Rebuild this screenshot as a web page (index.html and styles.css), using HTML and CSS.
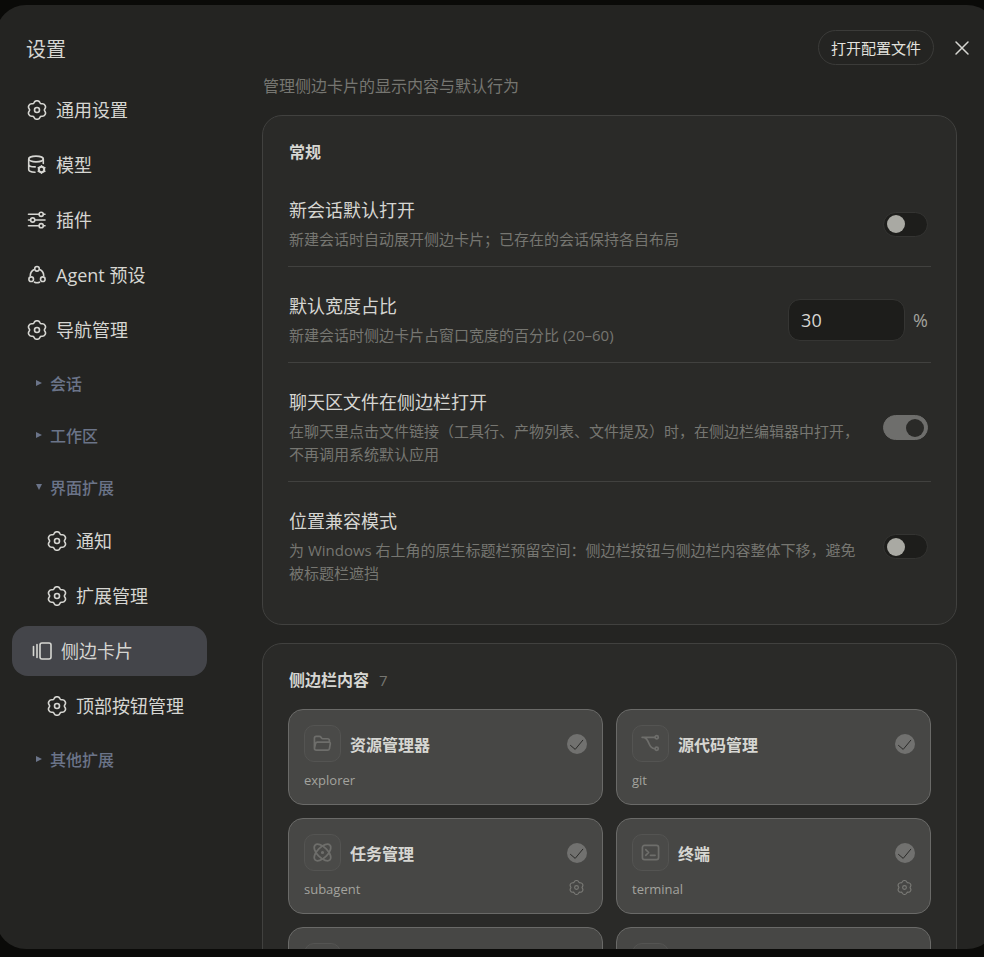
FILE: index.html
```html
<!DOCTYPE html>
<html lang="zh-CN">
<head>
<meta charset="utf-8">
<title>设置</title>
<link rel="stylesheet" href="styles.css">
</head>
<body>
<svg class="defs" aria-hidden="true">
  <symbol id="gear" viewBox="0 0 20 20">
    <path d="M6.950 2.820A3.260 3.260 0 0 1 13.050 2.820Q13.550 3.850 14.690 3.770A3.260 3.260 0 0 1 17.740 9.050Q17.100 10 17.740 10.950A3.260 3.260 0 0 1 14.690 16.230Q13.550 16.150 13.050 17.180A3.260 3.260 0 0 1 6.950 17.180Q6.450 16.150 5.310 16.230A3.260 3.260 0 0 1 2.260 10.950Q2.900 10 2.260 9.050A3.260 3.260 0 0 1 5.310 3.770Q6.450 3.850 6.950 2.820z"/>
    <circle cx="10" cy="10" r="2.500"/>
  </symbol>
</svg>
<div class="dialog" role="dialog" aria-labelledby="dialog-title">
  <aside class="sidebar">
    <h1 class="dialog-title" id="dialog-title">设置</h1>
    <nav class="nav">
      <a class="nav-item" href="#general"><svg class="icon"><use href="#gear"/></svg>通用设置</a>
      <a class="nav-item" href="#models"><svg class="icon" viewBox="0 0 20 20"><ellipse cx="9" cy="4" rx="7.300" ry="2.900"/><path d="M1.700 4v10.500c0 1.700 2.600 2.600 6.300 2.800M16.300 4v4.500M1.700 9.200c0 1.700 3.200 2.700 6.500 2.700"/><circle class="heavy" cx="14.500" cy="14.500" r="2.700"/><path d="M14.500 10.900v.6M14.500 17.500v.7M11.300 12.700l.6.300M17.200 16l.6.300M11.300 16.300l.6-.3M17.200 13l.6-.3"/></svg>模型</a>
      <a class="nav-item" href="#plugins"><svg class="icon" viewBox="0 0 20 20"><path d="M1.500 4.300h10.500M16.500 4.300h1.500M1.500 10h2M8 10h10M1.500 15.700h10.500M16.500 15.700h1.500"/><circle cx="14.200" cy="4.300" r="2.100"/><circle cx="5.700" cy="10" r="2.100"/><circle cx="14.200" cy="15.700" r="2.100"/></svg>插件</a>
      <a class="nav-item" href="#agents"><svg class="icon" viewBox="0 0 20 20"><circle cx="10" cy="3.800" r="2.300"/><circle cx="4.200" cy="14.200" r="2.300"/><circle cx="15.800" cy="14.200" r="2.300"/><path d="M6.700 4.800a7 7 0 0 0-3.400 6M13.300 4.800a7 7 0 0 1 3.400 6M7.500 17.200c1.600.7 3.400.7 5 0"/></svg>Agent 预设</a>
      <a class="nav-item" href="#navigation"><svg class="icon"><use href="#gear"/></svg>导航管理</a>
      <button class="nav-group" type="button" aria-expanded="false"><svg class="caret" viewBox="0 0 8 8"><path d="M1 1l6 3-6 3z"/></svg>会话</button>
      <button class="nav-group" type="button" aria-expanded="false"><svg class="caret" viewBox="0 0 8 8"><path d="M1 1l6 3-6 3z"/></svg>工作区</button>
      <button class="nav-group" type="button" aria-expanded="true"><svg class="caret" viewBox="0 0 8 8"><path d="M1 1h6L4 7z"/></svg>界面扩展</button>
      <a class="nav-item nested" href="#notifications"><svg class="icon"><use href="#gear"/></svg>通知</a>
      <a class="nav-item nested" href="#extensions"><svg class="icon"><use href="#gear"/></svg>扩展管理</a>
      <a class="nav-item active" href="#side-card" aria-current="page"><svg class="icon" viewBox="0 0 20 20"><rect x="8" y="2" width="11" height="16" rx="2"/><path d="M1.500 5.500v9M5 3.500v13"/></svg>侧边卡片</a>
      <a class="nav-item nested" href="#top-buttons"><svg class="icon"><use href="#gear"/></svg>顶部按钮管理</a>
      <button class="nav-group" type="button" aria-expanded="false"><svg class="caret" viewBox="0 0 8 8"><path d="M1 1l6 3-6 3z"/></svg>其他扩展</button>
    </nav>
  </aside>

  <main class="main">
    <header class="toolbar">
      <button class="open-config" type="button">打开配置文件</button>
      <button class="close" type="button" aria-label="关闭"><svg viewBox="0 0 14 14"><path d="M1 1l12 12M13 1L1 13"/></svg></button>
    </header>
    <div class="content">
      <p class="intro">管理侧边卡片的显示内容与默认行为</p>

      <section class="panel">
        <h2 class="panel-title">常规</h2>
        <div class="settings">
          <div class="setting">
            <div class="setting-text">
              <label class="setting-name" for="auto-open">新会话默认打开</label>
              <p class="setting-desc">新建会话时自动展开侧边卡片；已存在的会话保持各自布局</p>
            </div>
            <input class="switch" type="checkbox" role="switch" id="auto-open">
          </div>
          <div class="setting">
            <div class="setting-text">
              <label class="setting-name" for="width">默认宽度占比</label>
              <p class="setting-desc">新建会话时侧边卡片占窗口宽度的百分比 (20–60)</p>
            </div>
            <div class="percent"><input class="number" type="text" inputmode="numeric" id="width" value="30"><span>%</span></div>
          </div>
          <div class="setting">
            <div class="setting-text">
              <label class="setting-name" for="open-files">聊天区文件在侧边栏打开</label>
              <p class="setting-desc">在聊天里点击文件链接（工具行、产物列表、文件提及）时，在侧边栏编辑器中打开，不再调用系统默认应用</p>
            </div>
            <input class="switch" type="checkbox" role="switch" id="open-files" checked>
          </div>
          <div class="setting">
            <div class="setting-text">
              <label class="setting-name" for="compat">位置兼容模式</label>
              <p class="setting-desc">为 Windows 右上角的原生标题栏预留空间：侧边栏按钮与侧边栏内容整体下移，避免被标题栏遮挡</p>
            </div>
            <input class="switch" type="checkbox" role="switch" id="compat">
          </div>
        </div>
      </section>

      <section class="panel">
        <h2 class="panel-title">侧边栏内容<span class="count">7</span></h2>
        <div class="tiles">
          <article class="tile">
            <div class="tile-head">
              <span class="tile-icon"><svg viewBox="0 0 20 20"><path d="M1.500 15V4.200c0-1 .7-1.700 1.700-1.700h3.600c.7 0 1.200.3 1.600.9l.6.9c.3.500.700.700 1.300.700h5c1.200 0 2 .8 2 2v1.500M1.500 15c0 1.300.7 2 2 2h11.800c1.100 0 1.800-.6 2-1.700l.9-5c.2-1.100-.5-1.800-1.500-1.800H4.500c-1 0-1.500.5-1.800 1.400z"/></svg></span>
              <label class="tile-name" for="t-explorer">资源管理器</label>
              <span class="check"><input type="checkbox" id="t-explorer" checked><svg viewBox="0 0 20 20"><path d="M3.500 11.400l4.700 4L15.800 6.200"/></svg></span>
            </div>
            <div class="tile-foot"><span>explorer</span></div>
          </article>
          <article class="tile">
            <div class="tile-head">
              <span class="tile-icon"><svg viewBox="0 0 20 20"><path d="M1.200 3.500h13.300M3 3.500c3.300.7 4 3.200 5.100 6 1.200 3.100 2.900 5.600 6.400 6"/><circle cx="16.500" cy="3.500" r="1.700"/><circle cx="16.500" cy="15.500" r="1.700"/></svg></span>
              <label class="tile-name" for="t-git">源代码管理</label>
              <span class="check"><input type="checkbox" id="t-git" checked><svg viewBox="0 0 20 20"><path d="M3.500 11.400l4.700 4L15.800 6.200"/></svg></span>
            </div>
            <div class="tile-foot"><span>git</span></div>
          </article>
          <article class="tile">
            <div class="tile-head">
              <span class="tile-icon"><svg viewBox="0 0 20 20"><ellipse cx="10" cy="10" rx="11" ry="5.500" transform="rotate(45 10 10)"/><ellipse cx="10" cy="10" rx="11" ry="5.500" transform="rotate(-45 10 10)"/><circle cx="10" cy="10" r=".8"/></svg></span>
              <label class="tile-name" for="t-subagent">任务管理</label>
              <span class="check"><input type="checkbox" id="t-subagent" checked><svg viewBox="0 0 20 20"><path d="M3.500 11.400l4.700 4L15.800 6.200"/></svg></span>
            </div>
            <div class="tile-foot"><span>subagent</span><button class="tile-settings" type="button" aria-label="任务管理设置"><svg><use href="#gear"/></svg></button></div>
          </article>
          <article class="tile">
            <div class="tile-head">
              <span class="tile-icon"><svg viewBox="0 0 20 20"><rect x="1.500" y="2.500" width="17" height="15" rx="2.200"/><path d="M5 7l3 3-3 3M10 13h4.800"/></svg></span>
              <label class="tile-name" for="t-terminal">终端</label>
              <span class="check"><input type="checkbox" id="t-terminal" checked><svg viewBox="0 0 20 20"><path d="M3.500 11.400l4.700 4L15.800 6.200"/></svg></span>
            </div>
            <div class="tile-foot"><span>terminal</span><button class="tile-settings" type="button" aria-label="终端设置"><svg><use href="#gear"/></svg></button></div>
          </article>
          <article class="tile"><div class="tile-head"><span class="tile-icon"></span></div><div class="tile-foot"></div></article>
          <article class="tile"><div class="tile-head"><span class="tile-icon"></span></div><div class="tile-foot"></div></article>
        </div>
      </section>
    </div>
  </main>
</div>
</body>
</html>
```

FILE: styles.css
```css
* {
  box-sizing: border-box;
}

body {
  display: flex;
  height: 100vh;
  margin: 0;
  overflow: hidden;
  background: #0a0a08;
  color: #d6d6d2;
  font-family: "Open Sans", "Noto Sans CJK SC", sans-serif;
  font-size: 18px;
}

h1,
h2,
p {
  margin: 0;
}

button,
input {
  margin: 0;
  padding: 0;
  border: 0;
  background: none;
  color: inherit;
  font: inherit;
}

svg {
  display: block;
  flex: none;
  overflow: visible;
  fill: none;
  stroke: currentColor;
  stroke-linecap: round;
  stroke-linejoin: round;
}

.defs {
  position: absolute;
  width: 0;
  height: 0;
}

.dialog {
  display: flex;
  flex: 1;
  gap: 55px;
  min-width: 0;
  margin: 5px -13px 8px -4px;
  padding: 0 40px 0 16px;
  overflow: hidden;
  border-radius: 30px;
  background: #242422;
}

/* Sidebar */

.sidebar {
  flex: none;
  width: 195px;
}

.dialog-title {
  padding: 30px 14px 20px;
  font-size: 20px;
  font-weight: 400;
  line-height: 30px;
}

.nav {
  display: flex;
  flex-direction: column;
  gap: 5px;
}

.nav-item {
  display: flex;
  align-items: center;
  gap: 9px;
  height: 50px;
  padding: 0 15px;
  border-radius: 16px;
  color: inherit;
  line-height: 24px;
  text-decoration: none;
  white-space: nowrap;
}

.nav-item.nested {
  padding-left: 35px;
}

.nav-item.active {
  padding-left: 20px;
  background: #44454a;
}

.icon {
  width: 20px;
  height: 20px;
  stroke-width: 1.6;
}

.icon .heavy {
  stroke-width: 2;
}

.nav-group {
  display: flex;
  align-items: center;
  gap: 7px;
  height: 47px;
  padding: 0 23px 2px;
  color: #6b7489;
  font-size: 16px;
  font-weight: 500;
}

.caret {
  width: 8px;
  height: 8px;
  fill: currentColor;
  stroke: none;
}

/* Main column */

.main {
  display: flex;
  flex: 1;
  flex-direction: column;
  min-width: 0;
}

.toolbar {
  display: flex;
  align-items: center;
  justify-content: flex-end;
  gap: 17px;
  margin-right: -16px;
  padding-top: 25px;
}

.open-config {
  height: 35px;
  padding: 0 12px;
  border: 1px solid #3b3b39;
  border-radius: 18px;
  color: #e2e2de;
  font-size: 15px;
}

.close {
  padding: 4px;
}

.close svg {
  width: 14px;
  height: 14px;
  stroke-width: 1.5;
}

.content {
  flex: 1;
  min-height: 0;
  overflow: hidden;
}

.intro {
  padding: 9px 1px 17px;
  color: #767671;
  font-size: 16px;
  line-height: 24px;
}

.panel {
  margin-bottom: 18px;
  padding: 24px 25px;
  border: 1px solid #41413f;
  border-radius: 20px;
  background: #2a2a28;
}

.panel-title {
  padding-left: 1px;
  font-size: 16px;
  font-weight: 700;
  line-height: 24px;
}

.count {
  margin-left: 10px;
  color: #767671;
  font-size: 15px;
  font-weight: 400;
}

.settings {
  padding-top: 7px;
}

.setting {
  display: flex;
  align-items: center;
  justify-content: space-between;
  gap: 15px;
  padding: 26px 3px 15px 1px;
  border-bottom: 1px solid #41413f;
}

.setting:last-child {
  border-bottom: 0;
}

.setting-name {
  display: block;
  line-height: 26px;
}

.setting-desc {
  margin-top: 5px;
  color: #767671;
  font-size: 15px;
  line-height: 23px;
}

.switch {
  display: flex;
  flex: none;
  align-items: center;
  width: 45px;
  height: 25px;
  padding: 0 3px;
  border: 1px solid #343432;
  border-radius: 13px;
  background: #1d1d1b;
  appearance: none;
}

.switch::before {
  width: 18px;
  height: 18px;
  border-radius: 50%;
  background: #a9a9a3;
  content: "";
}

.switch:checked {
  justify-content: flex-end;
  border-color: #6e6e6c;
  background: #6e6e6c;
}

.switch:checked::before {
  background: #2a2a28;
}

.percent {
  display: flex;
  flex: none;
  align-items: center;
  gap: 8px;
  color: #a3a39e;
}

.number {
  width: 117px;
  height: 42px;
  padding: 0 12px;
  border: 1px solid #353533;
  border-radius: 12px;
  background: #1d1d1b;
  color: #d6d6d2;
}

/* Sidebar content tiles */

.tiles {
  display: grid;
  grid-template-columns: 1fr 1fr;
  gap: 13px;
  padding-top: 17px;
}

.tile {
  padding: 15px;
  border: 1px solid #6a6a68;
  border-radius: 15px;
  background: #474745;
}

.tile-head {
  display: flex;
  align-items: center;
  gap: 9px;
}

.tile-icon {
  display: grid;
  place-items: center;
  width: 37px;
  height: 37px;
  border: 1px solid #545452;
  border-radius: 10px;
  background: #4a4a48;
  color: #6e6e6b;
}

.tile-icon svg {
  width: 19px;
  height: 19px;
  stroke-width: 1.8;
}

.tile-name {
  flex: 1;
  font-size: 16px;
  font-weight: 700;
}

.check {
  display: grid;
  color: #2a2a28;
}

.check input,
.check svg {
  grid-area: 1 / 1;
  width: 20px;
  height: 20px;
}

.check input {
  border-radius: 50%;
  background: #71716f;
  appearance: none;
}

.check svg {
  pointer-events: none;
}

.tile-foot {
  display: flex;
  justify-content: space-between;
  height: 27px;
  padding-top: 9px;
  color: #a3a39e;
  font-size: 13px;
  line-height: 18px;
}

.tile-settings {
  width: 15px;
  height: 15px;
  margin: 0 3px;
  color: #7a7a76;
}

.tile-settings svg {
  width: 15px;
  height: 15px;
  stroke-width: 1.5;
}
```
